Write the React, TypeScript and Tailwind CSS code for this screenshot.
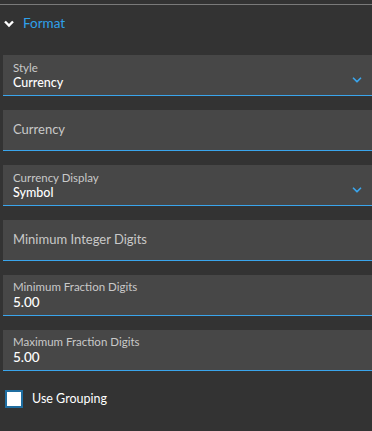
import { ChevronDown } from "lucide-react";

const font = { fontFamily: "Lato, 'Noto Sans', sans-serif" };

function SelectField({ label, value }: { label: string; value: string }) {
  return (
    <div className="relative flex h-[41px] flex-col justify-center border-b border-[#3aa5ec] bg-[#474747] pl-[10px] pt-[1px]">
      <div className="text-[11.5px] leading-[14px] text-[#c9c9c9]">{label}</div>
      <div className="text-[12.5px] font-medium leading-[16px] text-white">{value}</div>
      <ChevronDown
        className="absolute right-[8px] top-[18px] h-[14px] w-[14px] text-[#3aa5ec]"
        strokeWidth={3}
      />
    </div>
  );
}

function TextField({ placeholder }: { placeholder: string }) {
  return (
    <div className="flex h-[41px] items-center border-b border-[#3aa5ec] bg-[#474747] pl-[10px]">
      <span className="text-[13px] text-[#c9c9c9]">{placeholder}</span>
    </div>
  );
}

function NumberField({ label, value }: { label: string; value: string }) {
  return (
    <div className="flex h-[41px] flex-col justify-center border-b border-[#3aa5ec] bg-[#474747] pl-[10px] pt-[1px]">
      <div className="text-[11.5px] leading-[14px] text-[#c9c9c9]">{label}</div>
      <div className="text-[13.5px] font-medium leading-[17px] text-white">{value}</div>
    </div>
  );
}

export default function App() {
  return (
    <div className="h-[431px] w-[372px] overflow-hidden bg-[#333333]" style={font}>
      <div className="h-[4px]" />
      <div className="h-[1px] bg-[#7a7a7a]" />
      <div className="flex h-[37px] items-center gap-[9px] pl-[4px]">
        <svg width="10" height="8" viewBox="0 0 10 8" className="mt-[1px]">
          <polyline points="1,1.5 5,5.5 9,1.5" fill="none" stroke="white" strokeWidth="2.4" />
        </svg>
        <span className="text-[13.5px] text-[#2fa0ea]">Format</span>
      </div>
      <div className="flex flex-col gap-[14px] pl-[3px] pt-[13px]">
        <SelectField label="Style" value="Currency" />
        <TextField placeholder="Currency" />
        <SelectField label="Currency Display" value="Symbol" />
        <TextField placeholder="Minimum Integer Digits" />
        <NumberField label="Minimum Fraction Digits" value="5.00" />
        <NumberField label="Maximum Fraction Digits" value="5.00" />
      </div>
      <label className="mt-[19px] flex items-center gap-[9px] pl-[5px]">
        <span className="h-[18px] w-[18px] border-[2px] border-[#1f6da0] bg-white" />
        <span className="text-[12.5px] text-white">Use Grouping</span>
      </label>
    </div>
  );
}
